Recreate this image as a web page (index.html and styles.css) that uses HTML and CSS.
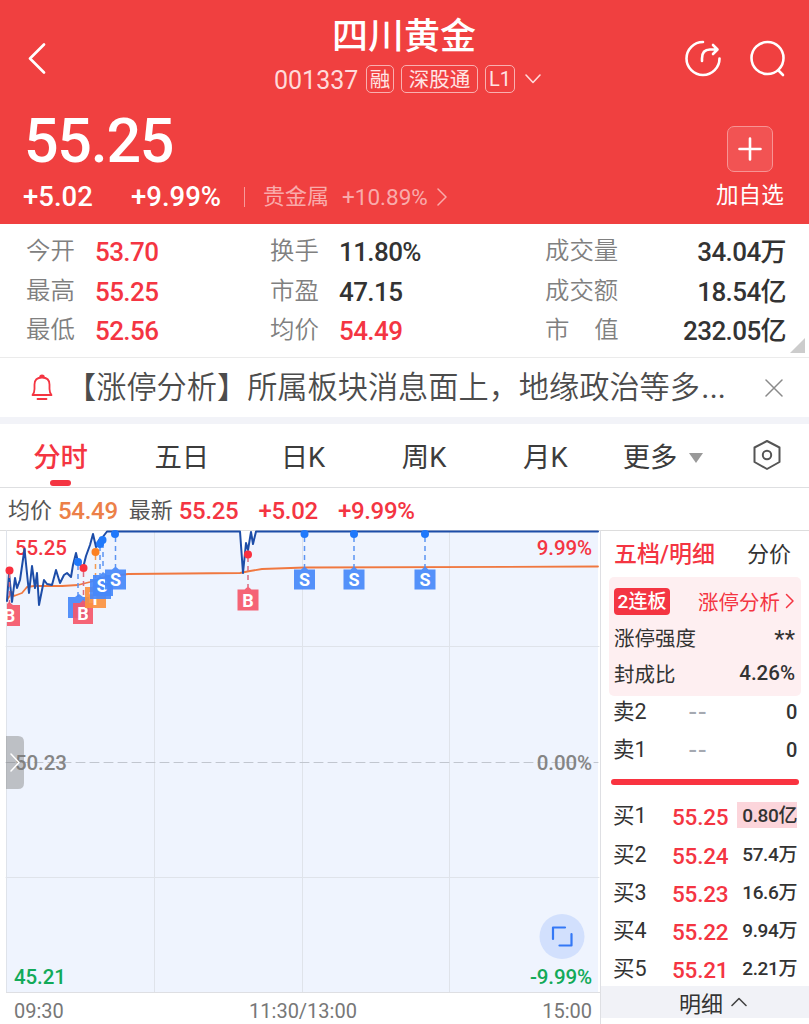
FILE: index.html
```html
<!DOCTYPE html>
<html lang="zh-CN">
<head>
  <meta charset="UTF-8">
  <title>四川黄金 001337</title>
  <link rel="stylesheet" href="styles.css">
</head>
<body>
  <header class="header">
    <div class="topbar">
      <svg class="back" width="20" height="32" viewBox="0 0 20 32"><path d="M17 2.5 L3 16.5 L17 30.5"/></svg>
      <div class="title">
        <h1>四川黄金</h1>
        <div class="code-row">
          <span class="code">001337</span>
          <span class="tag">融</span>
          <span class="tag tag-wide">深股通</span>
          <span class="tag tag-level">L1</span>
          <svg class="chevron" width="16" height="12" viewBox="0 0 16 12"><path d="M1 2 L8 9.500 L15 2"/></svg>
        </div>
      </div>
      <div class="actions">
        <svg width="38" height="38" viewBox="0 0 38 38">
          <path d="M19 2 A16.500 16.500 0 1 0 35.500 18.500"/>
          <path d="M18 21 V18.500 Q18 9.500 26 9.500 H32 M29 5 L33.500 9.500 L29 14"/>
        </svg>
        <svg width="38" height="38" viewBox="0 0 38 38">
          <circle cx="18.500" cy="18" r="16"/>
          <path d="M29.500 30.500 L34 35"/>
        </svg>
      </div>
    </div>

    <div class="price-row">
      <div class="price">55.25</div>
      <div class="add-box">
        <svg width="24" height="24" viewBox="0 0 24 24"><path d="M12 1.500 V22.500 M1.500 12 H22.500"/></svg>
      </div>
    </div>

    <div class="change-row">
      <span class="change">+5.02</span>
      <span class="percent">+9.99%</span>
      <span class="sector"><span class="sector-name">贵金属</span>+10.89%<svg width="12" height="18" viewBox="0 0 12 18"><path d="M2 1 L10 9 L2 17"/></svg></span>
      <span class="add-label">加自选</span>
    </div>
  </header>

  <section class="stats">
    <span class="label">今开</span><span class="value red">53.70</span>
    <span class="label">换手</span><span class="value">11.80%</span>
    <span class="label">成交量</span><span class="value end">34.04万</span>

    <span class="label">最高</span><span class="value red">55.25</span>
    <span class="label">市盈</span><span class="value">47.15</span>
    <span class="label">成交额</span><span class="value end">18.54亿</span>

    <span class="label">最低</span><span class="value red">52.56</span>
    <span class="label">均价</span><span class="value red">54.49</span>
    <span class="label">市&emsp;值</span><span class="value end">232.05亿</span>
    <i class="corner"></i>
  </section>

  <section class="notice">
    <svg class="bell" width="22" height="28" viewBox="0 0 22 28">
      <path d="M1.500 21 Q3.500 18.500 3.500 15 V10.500 Q3.500 3.500 11 3.500 Q18.500 3.500 18.500 10.500 V15 Q18.500 18.500 20.500 21 Z M9 3.500 Q9 1.500 11 1.500 Q13 1.500 13 3.500 M6.500 25 H15.500"/>
    </svg>
    <span class="notice-text">【涨停分析】所属板块消息面上，地缘政治等多<span class="more">…</span></span>
    <svg class="close" width="18" height="18" viewBox="0 0 18 18"><path d="M1 1 L17 17 M17 1 L1 17"/></svg>
  </section>

  <nav class="tabs">
    <span class="tab active">分时</span>
    <span class="tab">五日</span>
    <span class="tab">日K</span>
    <span class="tab">周K</span>
    <span class="tab">月K</span>
    <span class="tab tab-more">更多<i class="arrow"></i></span>
    <svg class="setting" width="30" height="32" viewBox="0 0 30 32">
      <path d="M15 2 L27.500 8.500 V23 L15 30 L2.500 23 V8.500 Z"/>
      <circle cx="15" cy="16" r="4.200"/>
    </svg>
  </nav>

  <div class="quote">
    <span class="quote-name">均价</span><span class="orange">54.49</span>
    <span class="quote-name latest">最新</span><span class="red">55.25</span>
    <span class="red gap">+5.02</span>
    <span class="red gap">+9.99%</span>
  </div>

  <main class="main">
    <section class="chart">
      <svg width="600" height="462" viewBox="0 530 600 462">
        <path class="area" d="M7 992 V601 L9 573 L12 602 L15 578 L17 588 L20 580 L24.500 549 L29 593 L32 566 L35 588 L37 573 L39 605 L44 580 L47 584 L52 585 L56 570 L60 583 L64 575 L67 573 L71 577 L73 565 L76 553 L78 562 L83 568 L86 556 L90 545 L93 534 L96 547 L99 540 L102 538 L107 531.500 H240 L243 573 L246 543 L248 550 L251 532 L253 544 L256 531.500 H598 V992 Z"/>
        <!-- grid -->
        <path class="grid" d="M6.500 530 V992 M154.500 532 V992 M302.500 532 V992 M449.500 532 V992 M6 646.500 H599 M6 877.500 H599"/>
        <path class="zero" d="M6 762.500 H598"/>

        <text class="num red" x="15" y="555">55.25</text>
        <text class="num red" x="592" y="555" text-anchor="end">9.99%</text>
        <text class="num gray" x="15" y="770">50.23</text>
        <text class="num gray" x="592" y="770" text-anchor="end">0.00%</text>
        <text class="num green" x="14" y="984">45.21</text>
        <text class="num green" x="592" y="984" text-anchor="end">-9.99%</text>

        <!-- average and price -->
        <path class="avg" d="M7 600 L12 592 L14 596 L22 593 L27 587 L34 586 L62 586 L78 585 L90 582 L105 577 L128 574 L240 573 L250 571 L262 569 L305 567.500 L598 566.500"/>
        <path class="line" d="M7 601 L9 573 L12 602 L15 578 L17 588 L20 580 L24.500 549 L29 593 L32 566 L35 588 L37 573 L39 605 L44 580 L47 584 L52 585 L56 570 L60 583 L64 575 L67 573 L71 577 L73 565 L76 553 L78 562 L83 568 L86 556 L90 545 L93 534 L96 547 L99 540 L102 538 L107 531.500 H240 L243 573 L246 543 L248 550 L251 532 L253 544 L256 531.500 H598"/>

        <!-- trade markers -->
        <path class="stem buy" d="M9.500 573 V604 M83.500 572 V600 M248 557 V587"/>
        <path class="stem sell" d="M78 565 V597 M100 546 V575 M103 543 V570 M115.500 537 V567 M304.500 537 V567 M354 537 V567 M425 537 V567"/>
        <path class="stem both" d="M95.500 555 V587"/>
        <g class="mark buy"><path d="M7 604 L9 602 L13 605 H20 V626 H7 Z"/><text x="9.500" y="622">B</text></g>
        <g class="mark sell"><path d="M68 597 H75 L79 594 L83 597 H89 V618 H68 Z"/></g>
        <g class="mark buy"><path d="M73 603 H80 L83 600 L87 603 H93 V624 H73 Z"/><text x="83" y="620">B</text></g>
        <g class="mark both"><path d="M85 587 H92 L95 584 L99 587 H106 V608 H85 Z"/><text x="95" y="605">T</text></g>
        <g class="mark sell"><path d="M90 579 H97 L100 576 L104 579 H111 V599 H90 Z"/></g>
        <g class="mark sell"><path d="M93 575 H100 L103 572 L107 575 H113 V596 H93 Z"/><text x="102" y="592">S</text></g>
        <g class="mark sell"><path d="M105 569.500 H112 L115.500 566.500 L119 569.500 H126 V589.500 H105 Z"/><text x="115.500" y="586">S</text></g>
        <g class="mark buy"><path d="M237.500 589.500 H244.500 L248 586.500 L251.500 589.500 H258.500 V610.500 H237.500 Z"/><text x="248" y="607">B</text></g>
        <g class="mark sell"><path d="M294 569.500 H301 L304.500 566.500 L308 569.500 H315 V589.500 H294 Z"/><text x="304.500" y="586">S</text></g>
        <g class="mark sell"><path d="M343.500 569.500 H350.500 L354 566.500 L357.500 569.500 H364.500 V589.500 H343.500 Z"/><text x="354" y="586">S</text></g>
        <g class="mark sell"><path d="M414.500 569.500 H421.500 L425 566.500 L428.500 569.500 H435.500 V589.500 H414.500 Z"/><text x="425" y="586">S</text></g>
        <g class="dot buy"><circle cx="9.500" cy="570.500" r="4"/><circle cx="83.500" cy="568" r="4"/><circle cx="248" cy="554.500" r="4"/></g>
        <g class="dot sell"><circle cx="78" cy="562" r="4"/><circle cx="100" cy="544" r="4"/><circle cx="102.500" cy="540" r="4"/><circle cx="115" cy="534" r="4"/><circle cx="304.500" cy="534" r="4"/><circle cx="354" cy="534" r="4"/><circle cx="425" cy="534" r="4"/></g>
        <g class="dot both"><circle cx="95.500" cy="552" r="4"/></g>

        <!-- side handle -->
        <path class="handle" d="M6 736 H18 Q24 736 24 742 V783 Q24 789 18 789 H6 Z"/>
        <path class="handle-arrow" d="M11 754 L19 762.500 L11 771"/>

        <!-- fullscreen -->
        <circle class="full" cx="562" cy="936.500" r="22.500"/>
        <path class="full-icon" d="M553 939 V927.500 H565 M571.500 934 V945.500 H559.500"/>
      </svg>
      <div class="axis"><span>09:30</span><span>11:30/13:00</span><span>15:00</span></div>
    </section>

    <aside class="book">
      <div class="book-tabs"><b>五档/明细</b><span>分价</span></div>
      <div class="limit">
        <div><span class="streak">2连板</span><span class="limit-link">涨停分析<svg width="10" height="16" viewBox="0 0 10 16"><path d="M1.500 1.500 L8 8 L1.500 14.500"/></svg></span></div>
        <div><span>涨停强度</span><span class="stars">**</span></div>
        <div><span>封成比</span><strong>4.26%</strong></div>
      </div>
      <div class="row"><span>卖2</span><span class="none">--</span><span class="vol zero-vol">0</span></div>
      <div class="row"><span>卖1</span><span class="none">--</span><span class="vol zero-vol">0</span></div>
      <div class="ratio"></div>
      <div class="row"><span>买1</span><span class="bid">55.25</span><span class="vol hot">0.80亿</span></div>
      <div class="row"><span>买2</span><span class="bid">55.24</span><span class="vol">57.4万</span></div>
      <div class="row"><span>买3</span><span class="bid">55.23</span><span class="vol">16.6万</span></div>
      <div class="row"><span>买4</span><span class="bid">55.22</span><span class="vol">9.94万</span></div>
      <div class="row"><span>买5</span><span class="bid">55.21</span><span class="vol">2.21万</span></div>
      <div class="detail">明细<svg width="16" height="10" viewBox="0 0 16 10"><path d="M1 8.500 L8 1.500 L15 8.500"/></svg></div>
    </aside>
  </main>
</body>
</html>
```

FILE: styles.css
```css
* {
  box-sizing: border-box;
}
body {
  margin: 0;
  width: 809px;
  height: 1024px;
  overflow: hidden;
  background: #fff;
  color: #333;
  font-family: Roboto, "Noto Sans CJK SC", sans-serif;
}
svg {
  display: block;
  flex: none;
  fill: none;
  stroke-linecap: round;
  stroke-linejoin: round;
}
i {
  display: block;
}
.red {
  color: #f43542;
  fill: #f43542;
}
.orange {
  color: #ec8048;
}

/* Header */
.header {
  height: 224px;
  background: #f04040;
  color: #fff;
}
.header svg {
  stroke: #fff;
  stroke-width: 2.6;
}
.topbar {
  display: grid;
  grid-template-columns: 190px 1fr 190px;
  height: 112px;
}
.back {
  margin: 42px 0 0 27px;
}
.title {
  padding-top: 14px;
}
h1 {
  margin: 0 0 0 -1px;
  font-size: 36px;
  line-height: 46px;
  font-weight: 500;
  text-align: center;
}
.code-row {
  display: flex;
  align-items: center;
  height: 38px;
  margin-left: 84px;
}
.code {
  width: 92px;
  font-size: 25px;
  color: #ffdada;
  line-height: 38px;
  padding-top: 3px;
}
.tag {
  width: 28px;
  height: 28px;
  margin-right: 7px;
  border: 1px solid #f9b0b0;
  border-radius: 5px;
  font-size: 20.5px;
  line-height: 28px;
  text-align: center;
  color: #ffe4e4;
}
.tag-wide {
  width: 77px;
}
.tag-level {
  width: 30px;
  font-size: 20px;
  line-height: 27px;
}
.header .chevron {
  margin-left: 3px;
  stroke: #ffdada;
  stroke-width: 1.6;
}
.actions {
  display: flex;
  gap: 27px;
  padding: 40px 0 0 65px;
}
.price-row {
  display: flex;
  justify-content: space-between;
  height: 64px;
  padding: 0 36px 0 24px;
}
.price {
  font-size: 61px;
  line-height: 58px;
  font-weight: 500;
  letter-spacing: -1.3px;
}
.add-box {
  width: 46px;
  height: 46px;
  margin-top: 14px;
  padding: 10px;
  border: 1px solid #f79494;
  border-radius: 7px;
  background: #f25353;
}
.change-row {
  display: flex;
  align-items: center;
  height: 42px;
  padding-left: 23px;
  font-size: 27.5px;
  line-height: 44px;
  font-weight: 500;
}
.change {
  width: 108px;
}
.percent {
  width: 113px;
}
.sector {
  display: flex;
  align-items: center;
  width: 472px;
  padding-left: 18px;
  height: 20px;
  border-left: 1px solid #f79a9a;
  color: #f9abab;
  font-size: 22.5px;
  font-weight: 400;
}
.sector-name {
  width: 79px;
  font-size: 22px;
}
.header .sector svg {
  margin-left: 8px;
  stroke: #f9abab;
  stroke-width: 1.5;
}
.add-label {
  font-size: 22.6px;
  font-weight: 400;
  line-height: 38px;
  margin-top: -2px;
}

/* Stats */
.stats {
  position: relative;
  display: grid;
  grid-template-columns: 69px 175px 69px 206px 100px 141px;
  grid-auto-rows: 39.7px;
  height: 134px;
  padding: 7px 0 0 26px;
  border-bottom: 1px solid #ebebeb;
  line-height: 40px;
}
.label {
  font-size: 24.4px;
  font-weight: 350;
  color: #808080;
}
.value {
  padding-top: 1px;
  font-size: 26px;
  font-weight: 500;
  letter-spacing: -0.6px;
}
.value.end {
  text-align: right;
}
.corner {
  position: absolute;
  right: 4px;
  bottom: 4px;
  border-left: 15px solid transparent;
  border-bottom: 15px solid #ccc;
}

/* Notice */
.notice {
  display: flex;
  align-items: center;
  height: 66px;
  padding: 0 25px 0 31px;
  border-bottom: 7px solid #f2f3f8;
}
.bell {
  stroke: #f43542;
  stroke-width: 1.8;
}
.notice-text {
  width: 697px;
  margin-left: 13px;
  font-size: 30.2px;
  line-height: 62px;
  font-weight: 350;
  color: #4c4c4c;
  white-space: nowrap;
}
.more {
  font-size: 42px;
  line-height: 40px;
}
.close {
  margin-left: 2px;
  stroke: #8a8a8a;
  stroke-width: 1.5;
}

/* Period tabs */
.tabs {
  display: grid;
  grid-template-columns: repeat(6, 121.2px) 1fr;
  height: 64px;
  border-bottom: 1px solid #dedfe1;
}
.tab {
  display: flex;
  align-items: center;
  justify-content: center;
  padding-top: 5px;
  font-size: 27.4px;
  line-height: 58px;
  color: #3c3c3c;
}
.tab.active {
  position: relative;
  color: #f43542;
  font-weight: 500;
}
.tab.active::after {
  content: "";
  position: absolute;
  left: 50px;
  bottom: 1px;
  width: 21px;
  height: 6px;
  border-radius: 3px;
  background: #f43542;
}
.tab-more {
  padding-right: 7px;
}
.arrow {
  margin-left: 12px;
  border: 7px solid transparent;
  border-top: 10px solid #999;
  border-bottom: 0;
}
.setting {
  margin: 15px 0 0 25px;
  stroke: #555;
  stroke-width: 2;
}

/* Quote line */
.quote {
  display: flex;
  height: 42px;
  padding-left: 8px;
  font-size: 24px;
  line-height: 46px;
  font-weight: 500;
  letter-spacing: -0.3px;
}
.quote-name {
  width: 50px;
  font-size: 22px;
  line-height: 45px;
  letter-spacing: 0;
  font-weight: 400;
  color: #555;
}
.latest {
  margin-left: 11px;
}
.gap {
  margin-left: 20px;
}

/* Chart */
.main {
  display: flex;
  height: 494px;
  border-top: 1px solid #ddd;
}
.chart {
  width: 601px;
  border-right: 1px solid #dedfe3;
  margin-top: -1px;
}
.area {
  fill: #eff4fe;
}
.grid {
  stroke: #dfe3ea;
}
.zero {
  stroke: #c1c6cf;
  stroke-dasharray: 9 5;
}
.avg {
  stroke: #f07840;
  stroke-width: 1.8;
}
.line {
  stroke: #1d4da8;
  stroke-width: 2;
}
.num {
  font-size: 20.5px;
  font-weight: 500;
  letter-spacing: -0.1px;
}
.gray {
  fill: #858585;
}
.green {
  fill: #12aa59;
}
.stem {
  stroke-width: 1.5;
  stroke-dasharray: 5 4;
  stroke-linecap: butt;
}
.stem.buy {
  stroke: #d96b80;
}
.stem.sell {
  stroke: #5c94f2;
}
.stem.both {
  stroke: #f39a52;
}
.mark path {
  opacity: 0.92;
}
.mark.buy {
  fill: #f5576a;
}
.mark.sell {
  fill: #4788fa;
}
.mark.both {
  fill: #fb9140;
}
.mark text {
  fill: #fff;
  font-size: 18px;
  font-weight: 700;
  text-anchor: middle;
}
.dot.buy {
  fill: #fa303f;
}
.dot.sell {
  fill: #2079fb;
}
.dot.both {
  fill: #fc8021;
}
.handle {
  fill: #777;
  opacity: 0.42;
}
.handle-arrow {
  stroke: #fff;
  stroke-width: 1.5;
}
.full {
  fill: #d2e0fd;
}
.full-icon {
  stroke: #3478f6;
  stroke-width: 2.2;
}
.axis {
  display: flex;
  justify-content: space-between;
  height: 32px;
  margin-left: 6px;
  padding: 0 8px;
  border-top: 1px solid #dedfe3;
  font-size: 20px;
  line-height: 37px;
  color: #777;
}

/* Order book */
.book {
  width: 208px;
}
.book-tabs {
  display: flex;
  justify-content: space-between;
  height: 46px;
  padding: 0 18px 0 13px;
  font-size: 22px;
  line-height: 47px;
}
.book-tabs b {
  font-size: 23px;
  font-weight: 500;
  color: #f43542;
}
.limit {
  height: 119px;
  margin: 0 8px;
  padding: 6px 6px 0 5px;
  border-radius: 5px;
  background: #feeff1;
  font-size: 20.5px;
}
.limit div {
  display: flex;
  align-items: center;
  justify-content: space-between;
  height: 36px;
}
.limit strong {
  font-size: 20.5px;
  font-weight: 500;
}
.streak {
  width: 56px;
  height: 27px;
  border-radius: 4px;
  background: #f43542;
  color: #fff;
  font-size: 19px;
  line-height: 28px;
  font-weight: 500;
  text-align: center;
}
.limit-link {
  display: flex;
  align-items: center;
  color: #f43542;
}
.limit-link svg {
  margin-left: 5px;
  stroke: #f43542;
  stroke-width: 1.5;
}
.stars {
  font-size: 24px;
  line-height: 24px;
  padding-top: 4px;
}
.row {
  display: grid;
  grid-template-columns: 59px 1fr 60px;
  height: 38.2px;
  padding: 0 12px;
  font-size: 21.5px;
  line-height: 32px;
}
.none {
  padding-left: 17px;
  color: #a5a9b1;
  font-size: 27px;
  letter-spacing: 2px;
}
.bid {
  font-size: 22.5px;
  font-weight: 500;
  letter-spacing: -0.2px;
  line-height: 34px;
  color: #f43542;
}
.vol {
  font-size: 19px;
  font-weight: 500;
  letter-spacing: -0.4px;
  text-align: right;
  white-space: nowrap;
}
.zero-vol {
  font-size: 20px;
}
.ratio {
  height: 6px;
  margin: 7px 10px 15px;
  border-radius: 3px;
  background: #f93340;
}
.hot {
  height: 26px;
  margin-top: 2px;
  line-height: 28px;
  background: #fcd5db;
}
.detail {
  display: flex;
  align-items: center;
  justify-content: center;
  height: 32px;
  margin-top: -5px;
  padding-left: 16px;
  background: #f1f2f7;
  font-size: 22px;
}
.detail svg {
  margin-left: 8px;
  stroke: #444;
  stroke-width: 1.6;
}
```
